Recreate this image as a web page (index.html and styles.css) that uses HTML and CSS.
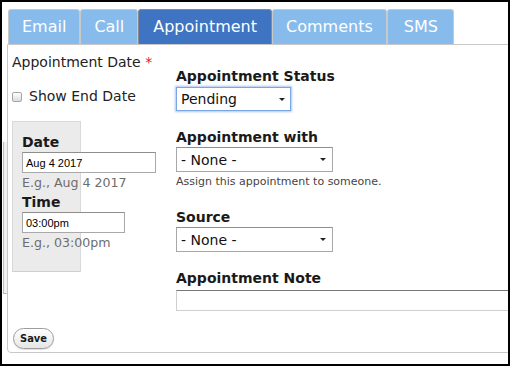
FILE: index.html
```html
<!DOCTYPE html>
<html lang="en">
<head>
  <meta charset="UTF-8">
  <meta name="viewport" content="width=device-width, initial-scale=1.0">
  <title>Appointment</title>
  <link rel="stylesheet" href="styles.css">
</head>
<body>
  <div class="frame">
    <ul class="tabs">
      <li>Email</li>
      <li>Call</li>
      <li class="active">Appointment</li>
      <li>Comments</li>
      <li class="sms">SMS</li>
    </ul>
    <div class="stage">
      <div class="rail"><div class="rail-strip"></div></div>
      <form class="panel">
        <div class="fields">
          <div class="col-when">
            <div class="field-label">Appointment Date <span class="req">*</span></div>
            <label class="check"><input type="checkbox"> Show End Date</label>
            <div class="when-box">
              <div class="box-label">Date</div>
              <input class="text-input date-input" type="text" value="Aug 4 2017">
              <div class="hint">E.g., Aug 4 2017</div>
              <div class="box-label time-label">Time</div>
              <input class="text-input time-input" type="text" value="03:00pm">
              <div class="hint">E.g., 03:00pm</div>
            </div>
          </div>
          <div class="col-details">
            <div class="strong-label first">Appointment Status</div>
            <div class="select-wrap status-wrap">
              <select class="select focused"><option>Pending</option></select>
            </div>
            <div class="strong-label gap">Appointment with</div>
            <div class="select-wrap wide-wrap">
              <select class="select"><option>- None -</option></select>
            </div>
            <div class="help">Assign this appointment to someone.</div>
            <div class="strong-label gap-lg">Source</div>
            <div class="select-wrap wide-wrap">
              <select class="select"><option>- None -</option></select>
            </div>
            <div class="strong-label gap">Appointment Note</div>
            <textarea class="note"></textarea>
          </div>
        </div>
        <div class="actions">
          <button type="button" class="save-btn">Save</button>
        </div>
      </form>
    </div>
  </div>
</body>
</html>
```

FILE: styles.css
```css
/* Page + screenshot frame */
html, body {
  margin: 0;
  padding: 0;
  background: #fff;
}
*, *:before, *:after {
  box-sizing: border-box;
}
body {
  font-family: 'DejaVu Sans', Verdana, sans-serif;
  color: #222;
}
.frame {
  width: 510px;
  height: 366px;
  border: 2px solid #000;
  overflow: hidden;
  padding-top: 7px;
  background: #fff;
}

/* Tabs */
.tabs {
  list-style: none;
  margin: 0 0 0 6px;
  padding: 0;
  display: flex;
}
.tabs li {
  height: 35px;
  line-height: 34px;
  padding: 0 13px;
  font-size: 16px;
  color: #fff;
  background-color: #86bbec;
  border: 1px solid #c9c9c9;
  border-bottom: 0;
  border-radius: 3px 3px 0 0;
  white-space: nowrap;
}
.tabs li.active {
  padding: 0 14px;
  background-color: #3e74c1;
  border-color: #8a8a8a;
}
.tabs li.sms {
  padding: 0 15px 0 16px;
}

/* Body row: odd strip at the far left + panel */
.stage {
  display: flex;
}
.rail {
  width: 5px;
  flex-shrink: 0;
}
.rail-strip {
  margin-top: 98px;
  margin-left: 1px;
  height: 152px;
  background: #f1f1f1;
  border-left: 1px solid #bdbdbd;
  border-bottom: 1px solid #bdbdbd;
}
.panel {
  width: 540px;
  flex-shrink: 0;
  height: 309px;
  border: 1px solid #c8c8c8;
  border-radius: 0 0 0 4px;
  padding: 9px 0 3px 4px;
  display: flex;
  flex-direction: column;
}
.fields {
  display: grid;
  grid-template-columns: 164px 1fr;
}

/* Left column: date / time */
.field-label {
  font-size: 14px;
  line-height: 17px;
}
.req {
  color: #e8191c;
}
.check {
  display: flex;
  align-items: center;
  margin-top: 17px;
  font-size: 14px;
  line-height: 17px;
}
.check input {
  appearance: none;
  -webkit-appearance: none;
  width: 10px;
  height: 10px;
  margin: 1px 7px 0 0;
  border: 1px solid #a5a5a5;
  border-radius: 2px;
  background: linear-gradient(#ffffff, #dcdcdc);
}
.when-box {
  width: 69px;
  height: 151px;
  margin-top: 16px;
  padding: 12px 0 0 9px;
  background: #ebebeb;
  border: 1px solid #d9d9d9;
  border-bottom-color: #cfcfcf;
}
.box-label {
  font-size: 14px;
  line-height: 17px;
  font-weight: bold;
  color: #1a1a1a;
}
.time-label {
  margin-top: 4px;
}
.text-input {
  display: block;
  height: 21px;
  margin: 1px 0 2px;
  padding: 0 3px;
  font-family: 'Liberation Sans', Arial, sans-serif;
  font-size: 11px;
  color: #000;
  background: #fff;
  border: 1px solid #a9a9a9;
  border-top-color: #8e8e8e;
  border-radius: 0;
  outline: none;
}
.date-input {
  width: 134px;
}
.time-input {
  width: 103px;
}
.hint {
  font-size: 12.6px;
  line-height: 15px;
  color: #6d6d6d;
  white-space: nowrap;
}

/* Right column: status, owner, source, note */
.col-details {
  margin-top: 14px;
}
.strong-label {
  font-size: 14px;
  line-height: 17px;
  font-weight: bold;
  color: #1a1a1a;
}
.strong-label.first {
  margin-bottom: 2px;
}
.strong-label.gap {
  margin-top: 18px;
}
.strong-label.gap-lg {
  margin-top: 20px;
}
.select-wrap {
  position: relative;
}
.select-wrap::after {
  content: "";
  position: absolute;
  top: 11px;
  border-left: 3px solid transparent;
  border-right: 3px solid transparent;
  border-top: 3px solid #222;
  pointer-events: none;
}
.status-wrap {
  width: 115px;
}
.status-wrap::after {
  left: 103px;
}
.wide-wrap {
  width: 157px;
  margin-top: 1px;
}
.wide-wrap::after {
  left: 144px;
}
.select {
  appearance: none;
  -webkit-appearance: none;
  display: block;
  width: 100%;
  height: 25px;
  margin: 0;
  padding: 0 0 0 4px;
  font-family: 'DejaVu Sans', Verdana, sans-serif;
  font-size: 14px;
  color: #111;
  background: #fff;
  border: 1px solid #a8a8a8;
  border-top-color: #8f8f8f;
  border-radius: 0;
  outline: none;
}
.select.focused {
  height: 24px;
  border-color: #7aa6e3;
  box-shadow: 0 0 2px 1px #a9c8f2;
}
.help {
  margin-top: 3px;
  font-size: 11px;
  line-height: 14px;
  color: #444;
}
.note {
  display: block;
  width: 400px;
  height: 21px;
  margin: 3px 0 0;
  padding: 0;
  border: 1px solid #cfcfcf;
  border-top-color: #777;
  resize: none;
  outline: none;
}

/* Save */
.actions {
  margin-top: auto;
  padding-left: 1px;
}
.save-btn {
  width: 41px;
  height: 21px;
  padding: 0;
  font-family: 'Liberation Sans Narrow', 'DejaVu Sans Condensed', 'Liberation Sans', sans-serif;
  font-size: 11px;
  font-weight: bold;
  color: #1a1a1a;
  background: linear-gradient(#ffffff, #e6e6e6);
  border: 1px solid #9d9d9d;
  border-radius: 11px;
  box-shadow: 0 1px 1px rgba(0, 0, 0, 0.12);
}
```
